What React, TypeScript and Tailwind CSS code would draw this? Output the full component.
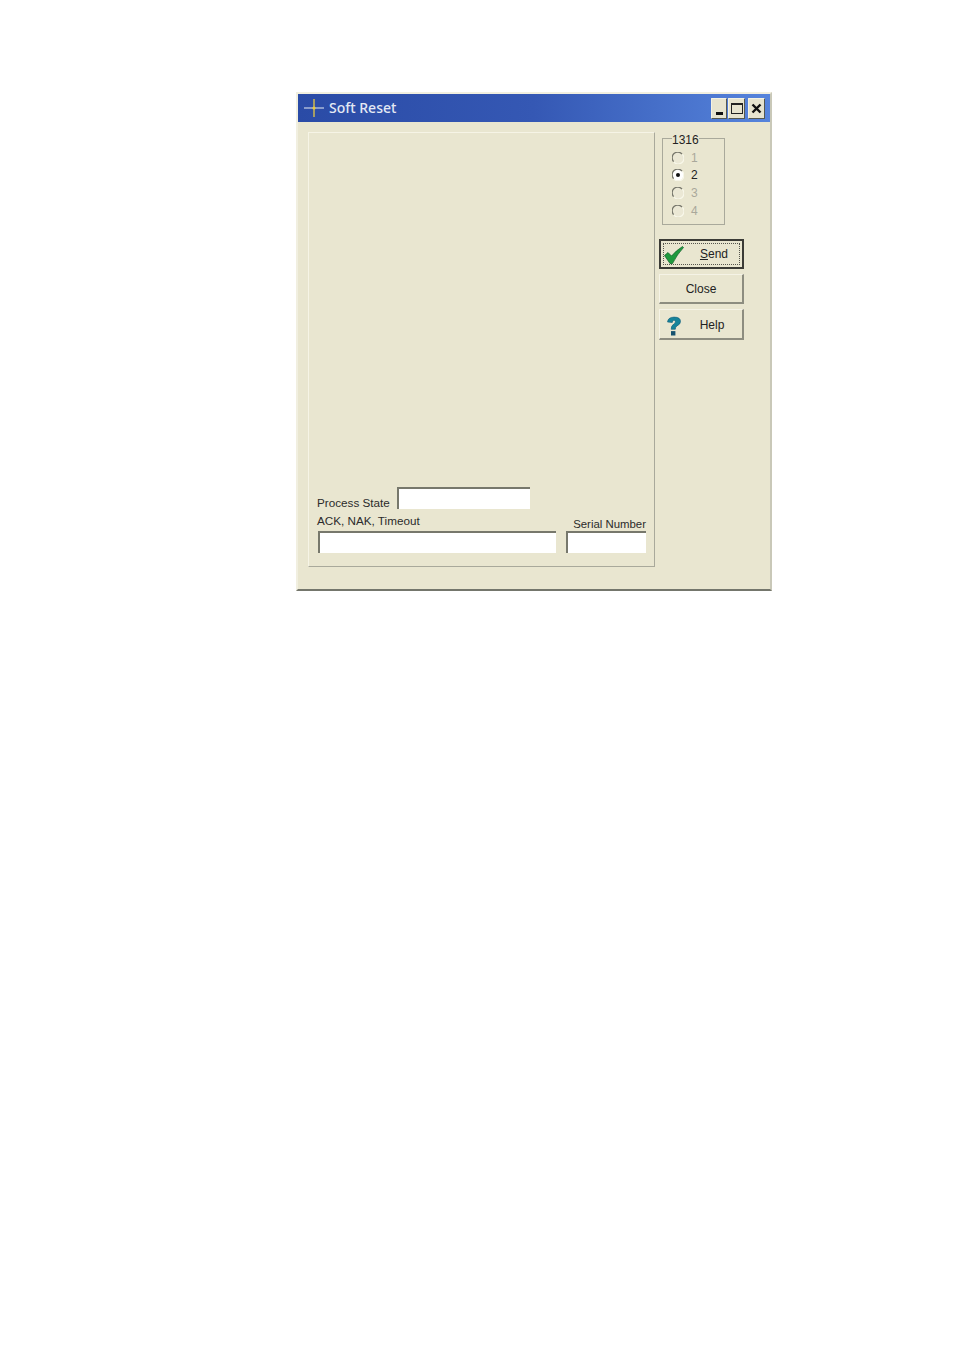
import React from 'react'

const font = "font-['Liberation_Sans',Arial,sans-serif]"

function TitleButton({ children, className = '' }: { children: React.ReactNode; className?: string }) {
  return (
    <div className={`flex h-[21px] items-center justify-center rounded-[1px] border-t border-l border-[#f4f2e2] border-r-[#55584f] border-b-[#55584f] border-r border-b bg-[#e7e4cf] ${className}`}>
      {children}
    </div>
  )
}

function Radio({ label, checked, disabled }: { label: string; checked?: boolean; disabled?: boolean }) {
  return (
    <div className="flex h-[17.6px] items-center gap-[7px]">
      <svg width="12" height="12" viewBox="0 0 12 12" className="shrink-0">
        <circle cx="6" cy="6" r="5.5" fill={disabled ? '#ebe8d5' : '#ffffff'} />
        <path d="M10 2 A5.5 5.5 0 0 0 1.6 9.6" fill="none" stroke="#77776c" strokeWidth="1.3" />
        <path d="M2 10.2 A5.5 5.5 0 0 0 10.4 2.4" fill="none" stroke="#f8f7ea" strokeWidth="1.2" />
        {checked && <circle cx="6" cy="6" r="2" fill="#111111" />}
      </svg>
      <span className={`text-[12px] leading-none ${disabled ? 'text-[#a9a89b]' : 'text-[#222222]'}`}>{label}</span>
    </div>
  )
}

function Field({ className }: { className: string }) {
  return <div className={`border-t-2 border-l-2 border-t-[#77786c] border-l-[#77786c] bg-white ${className}`} />
}

function Check() {
  return (
    <svg width="20" height="18" viewBox="0 0 20 18" className="absolute left-[3px] top-[5px]">
      <path d="M0.5 9.5 L4 6.5 L7.5 10 Q12 4.5 18.5 0.5 L19.5 1.5 Q13 8.5 8.5 17.5 L6 17.5 Z" fill="#1f9a3e" stroke="#0c5d26" strokeWidth="0.7" />
    </svg>
  )
}

function Question() {
  return (
    <svg width="16" height="21" viewBox="0 0 16 20" className="absolute left-[6px] top-[6px]">
      <path
        d="M1.5 5.5 Q2 0.8 8 0.6 Q14.5 0.6 14.5 5 Q14.5 7.8 11 9.4 Q9.3 10.4 9.3 12.8 L5.2 12.8 Q5 9.2 7.8 7.5 Q9.6 6.4 9.4 4.9 Q9 3.6 7.8 3.8 Q6.4 4 6.3 6 Z"
        fill="#16849a"
        stroke="#0e5a78"
        strokeWidth="0.6"
      />
      <rect x="5" y="14.6" width="4.4" height="4.4" fill="#16526f" />
    </svg>
  )
}

function ActionButton({ children, className }: { children: React.ReactNode; className: string }) {
  return (
    <div className={`relative flex items-center justify-center text-[12px] text-[#222222] ${className}`}>
      {children}
    </div>
  )
}

export default function App() {
  return (
    <div className={`min-h-[1350px] bg-white pl-[296px] pt-[92px] ${font}`}>
      <div className="flex h-[499px] w-[476px] flex-col border-2 border-[#f1efe0] border-r-[#c9c8b8] border-b-[#74766c] bg-[#e9e6d0]">
        {/* Title bar */}
        <div className="flex h-[28px] items-center bg-gradient-to-r from-[#2a4ba6] via-[#3558b4] to-[#5684dc] pl-[6px] pr-[5px]">
          <svg width="20" height="20" viewBox="0 0 20 20" className="shrink-0">
            <path d="M0 10 H20" stroke="#c9d3e6" strokeWidth="1.2" />
            <path d="M10 1 V19" stroke="#d9c14a" strokeWidth="1.4" />
            <circle cx="10" cy="10" r="1.6" fill="#e8c93c" />
          </svg>
          <span className="ml-[5px] font-['Noto_Sans',sans-serif] text-[14px] font-medium leading-none text-[#e4e9f4]">
            Soft Reset
          </span>
          <div className="ml-auto flex">
            <TitleButton className="w-[16px]">
              <div className="mt-[10px] h-[3px] w-[7px] bg-[#111111]" />
            </TitleButton>
            <TitleButton className="ml-[1px] w-[17px]">
              <div className="h-[11px] w-[12px] border border-t-2 border-[#222222]" />
            </TitleButton>
            <TitleButton className="ml-[3px] w-[17px]">
              <svg width="11" height="11" viewBox="0 0 11 11">
                <path d="M1.5 1.5 L9.5 9.5 M9.5 1.5 L1.5 9.5" stroke="#111111" strokeWidth="2.4" />
              </svg>
            </TitleButton>
          </div>
        </div>

        <div className="flex pl-[10px] pt-[10px]">
          {/* Main panel */}
          <div className="flex h-[435px] w-[347px] flex-col justify-end border border-[#f6f4e6] border-r-[#a9a99b] border-b-[#a9a99b] pb-[13px] pl-[8px] pr-[8px] text-[11.7px] text-[#2b2b2b]">
            <div className="flex items-end">
              <span className="w-[80px] leading-[12px]">Process State</span>
              <Field className="h-[22px] w-[133px]" />
            </div>
            <div className="flex items-end">
              <div>
                <div className="mb-[3px] mt-[5px] leading-[14px]">ACK, NAK, Timeout</div>
                <Field className="ml-[1px] h-[22px] w-[238px]" />
              </div>
              <div className="ml-[10px]">
                <div className="whitespace-nowrap pl-[7px] text-right text-[11.4px] leading-[14px]">Serial Number</div>
                <Field className="h-[22px] w-[80px]" />
              </div>
            </div>
          </div>

          {/* Right column */}
          <div className="ml-[4px] w-[85px]">
            <fieldset className="ml-[3px] -mt-[1px] h-[94px] w-[63px] border border-[#a9a99b] pl-[9px] text-[12px]">
              <legend className="-mb-[2px] translate-y-[2px] px-0 leading-[14px] text-[#222222]">1316</legend>
              <div className="pt-[6px]">
                <Radio label="1" disabled />
                <Radio label="2" checked />
                <Radio label="3" disabled />
                <Radio label="4" disabled />
              </div>
            </fieldset>

            <div className="mt-[14px] flex flex-col gap-[5px]">
              <ActionButton className="h-[30px] border-2 border-[#3b3b36] p-[2px]">
                <div className="flex h-full w-full items-center justify-center border border-dotted border-[#55554d] pl-[25px]">
                  <span>
                    <span className="underline">S</span>end
                  </span>
                </div>
                <Check />
              </ActionButton>
              <ActionButton className="h-[30px] border border-[#f5f3e6] border-r-2 border-b-2 border-r-[#8d8d80] border-b-[#8d8d80]">
                Close
              </ActionButton>
              <ActionButton className="h-[31px] border border-[#f5f3e6] border-r-2 border-b-2 border-r-[#8d8d80] border-b-[#8d8d80] pl-[22px] pt-[1px]">
                Help
                <Question />
              </ActionButton>
            </div>
          </div>
        </div>
      </div>
    </div>
  )
}
